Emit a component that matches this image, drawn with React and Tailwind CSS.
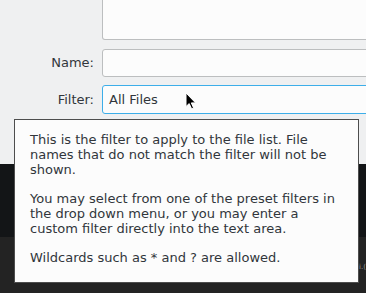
import React from 'react';

const font = { fontFamily: '"DejaVu Sans", "Noto Sans", sans-serif' };

export default function App() {
  return (
    <div className="relative w-[366px] h-[293px] overflow-hidden bg-[#232323] text-[13px] text-[#31363b]" style={font}>
      {/* Dialog area */}
      <div className="h-[164px] bg-[#eff0f1] flex flex-col">
        <div className="flex">
          <div className="w-[102px] shrink-0" />
          <div className="flex-1 h-[40px] -mr-[10px] bg-[#fcfcfc] border border-t-0 border-[#bcbebf] rounded-bl-[3px]" />
        </div>

        <div className="flex items-center mt-[9px]">
          <div className="w-[95px] pr-[1px] text-right">Name:</div>
          <div className="w-[7px] shrink-0" />
          <div className="flex-1 h-[28px] -mr-[10px] bg-[#fcfcfc] border border-[#bcbebf] rounded-[3px]" />
        </div>

        <div className="flex items-center mt-[8px]">
          <div className="w-[95px] pr-[1px] text-right">Filter:</div>
          <div className="w-[7px] shrink-0" />
          <div className="flex-1 h-[29px] -mr-[10px] bg-[#fcfcfc] border border-[#3daee9] rounded-[3px] flex items-center pl-[6px]">
            All Files
          </div>
        </div>
      </div>

      {/* Dark band */}
      <div className="h-[73px] bg-[#131517]" />
      <div className="absolute right-0 top-[264px] text-[7px] text-[#9a9a9a] leading-none">i.(</div>

      {/* Mouse cursor */}
      <svg className="absolute left-[185px] top-[92px]" width="12" height="18" viewBox="0 0 12 18">
        <path d="M1 1 L1 14.5 L4.2 11.6 L6.6 16.8 L8.6 15.9 L6.3 10.9 L10.6 10.9 Z" fill="#000" stroke="#fff" strokeWidth="1" strokeLinejoin="round" />
      </svg>

      {/* Tooltip */}
      <div className="absolute left-[14px] top-[119px] w-[345px] h-[164px] bg-[#fcfcfc] border border-[#4d4d4d] pl-[15px] pr-[15px] pt-[12px] text-[#31363b] leading-[15px]">
        <p>This is the filter to apply to the file list. File names that do not match the filter will not be shown.</p>
        <p className="mt-[14px]">You may select from one of the preset filters in the drop down menu, or you may enter a custom filter directly into the text area.</p>
        <p className="mt-[14px]">Wildcards such as * and ? are allowed.</p>
      </div>
    </div>
  );
}
